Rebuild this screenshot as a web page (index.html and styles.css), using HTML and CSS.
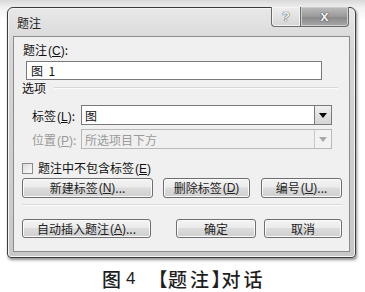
FILE: index.html
```html
<!DOCTYPE html>
<html lang="zh">
<head>
<meta charset="utf-8">
<link rel="stylesheet" href="styles.css">
</head>
<body>
<div class="win">
  <div class="titlebar">
    <span class="title">题注</span>
    <div class="caps">
      <span class="help">?</span>
      <span class="close">x</span>
    </div>
  </div>
  <div class="client">
    <div class="caplabel">题注<span class="mn">(<u>C</u>)</span>:</div>
    <div class="input">图&nbsp;&nbsp;1</div>
    <div class="group"><span>选项</span><span class="gline"></span></div>
    <div class="row">
      <span class="rlabel">标签<span class="mn">(<u>L</u>)</span>:</span>
      <div class="combo"><span class="ctext">图</span><span class="drop"><svg width="8" height="5" viewBox="0 0 8 5"><path d="M0 0H8L4 5Z" fill="#000"/></svg></span></div>
    </div>
    <div class="row dis">
      <span class="rlabel">位置<span class="mn">(<u>P</u>)</span>:</span>
      <div class="combo"><span class="ctext">所选项目下方</span><span class="drop"><svg width="8" height="5" viewBox="0 0 8 5"><path d="M0 0H8L4 5Z" fill="#a8a8a8"/></svg></span></div>
    </div>
    <div class="check"><span class="box"></span><span>题注中不包含标签<span class="mn">(<u>E</u>)</span></span></div>
    <div class="btns one">
      <span class="btn b1">新建标签<span class="mn">(<u>N</u>)</span>...</span>
      <span class="btn b2">删除标签<span class="mn">(<u>D</u>)</span></span>
      <span class="btn b3">编号<span class="mn">(<u>U</u>)</span>...</span>
    </div>
    <div class="sep"></div>
    <div class="btns two">
      <span class="btn c1">自动插入题注<span class="mn">(<u>A</u>)</span>...</span>
      <span class="btn c2">确定</span>
      <span class="btn c3">取消</span>
    </div>
  </div>
</div>
<div class="figcap"><span>图</span><span class="num">4</span><span class="br br1">【</span><span>题</span><span>注</span><span class="br br2">】</span><span>对</span><span>话</span></div>
</body>
</html>
```

FILE: styles.css
```css
html, body {
  margin: 0;
  padding: 0;
}
body {
  width: 365px;
  height: 292px;
  overflow: hidden;
  background: linear-gradient(#d8d8d8 0px, #f2f2f2 8px, #ffffff 20px);
  font-family: "Noto Sans CJK SC", "Noto Sans", sans-serif;
  font-size: 12px;
  color: #111;
  padding: 7px 0 0 7px;
  box-sizing: border-box;
}
.win {
  width: 349px;
  height: 251px;
  box-sizing: border-box;
  border: 1px solid #3c3c3c;
  border-radius: 6px 6px 4px 4px;
  background: linear-gradient(#e8e8e8, #d6d6d6 40px, #c8c8c8);
  box-shadow: 1px 2px 3px rgba(0,0,0,0.45), inset 0 0 0 1px #f4f4f4;
  display: flex;
  flex-direction: column;
}
.titlebar {
  height: 28px;
  flex: none;
  display: flex;
  align-items: flex-start;
  justify-content: space-between;
  padding-left: 9px;
}
.title {
  margin-top: 8px;
  line-height: 14px;
  color: #222;
}
.caps {
  display: flex;
  margin-right: 6px;
  margin-top: -1px;
  height: 20px;
}
.caps span {
  display: flex;
  align-items: center;
  justify-content: center;
  box-sizing: border-box;
  height: 20px;
  border: 1px solid #6a6a6a;
  border-top: none;
}
.help {
  width: 29px;
  border-radius: 0 0 0 4px;
  background: linear-gradient(#eeeeee, #d6d6d6);
  box-shadow: inset 0 0 0 1px #f6f6f6;
  font-family: "Liberation Sans", sans-serif;
  font-weight: bold;
  font-size: 13px;
  color: #f2f2f2;
  text-shadow: 0 0 1px #444, 0 0 1px #444;
  border-right: none !important;
}
.close {
  width: 49px;
  border-radius: 0 0 4px 0;
  background: linear-gradient(#bdbdbd, #9a9a9a 50%, #8a8a8a 55%, #a8a8a8);
  box-shadow: inset 0 0 0 1px #cfcfcf;
  font-family: "Liberation Sans", sans-serif;
  font-weight: bold;
  font-size: 15px;
  color: #f4f4f4;
  text-shadow: 0 0 1px #333, 0 0 1px #333;
  padding-bottom: 2px;
}
.client {
  flex: 1;
  margin: 0 5px 5px 5px;
  border: 1px solid #8c8c8c;
  background: #f0f0f0;
  padding: 6px 6px 0 8px;
  display: flex;
  flex-direction: column;
}
.mn {
  font-family: "Liberation Sans", sans-serif;
  font-size: 12px;
  margin-left: 1px;
}
.mn u {
  text-decoration-thickness: 1px;
  text-underline-offset: 1px;
}
.caplabel {
  line-height: 14px;
  height: 14px;
  margin-left: 1px;
}
.input {
  margin-top: 4px;
  margin-left: 4px;
  width: 296px;
  height: 19px;
  box-sizing: border-box;
  border: 1px solid #7a7a7a;
  background: #fff;
  line-height: 17px;
  padding-left: 4px;
}
.group {
  display: flex;
  align-items: center;
  height: 14px;
  line-height: 14px;
  margin-top: 1px;
}
.gline {
  flex: 1;
  height: 0;
  border-top: 1px solid #d6d6d6;
  border-bottom: 1px solid #fbfbfb;
  margin-left: 8px;
  margin-right: 5px;
}
.row {
  display: flex;
  align-items: center;
  height: 20px;
  margin-top: 10px;
}
.row.dis {
  margin-top: 4px;
  color: #9a9a9a;
}
.rlabel {
  width: 59px;
  padding-left: 10px;
  box-sizing: border-box;
  flex: none;
}
.combo {
  width: 251px;
  height: 20px;
  box-sizing: border-box;
  border: 1px solid #7a7a7a;
  background: #fff;
  display: flex;
  align-items: center;
  justify-content: space-between;
}
.row.dis .combo {
  border-color: #b8b8b8;
  background: #f0f0f0;
}
.ctext {
  padding-left: 3px;
}
.drop {
  width: 17px;
  height: 18px;
  box-sizing: border-box;
  border-left: 1px solid #7a7a7a;
  background: linear-gradient(#f0f0f0, #d4d4d4);
  display: flex;
  align-items: center;
  justify-content: center;
}
.row.dis .drop {
  border-left: 1px solid #c8c8c8;
  background: #f2f2f2;
}
.check {
  display: flex;
  align-items: center;
  height: 14px;
  margin-top: 12px;
  line-height: 14px;
}
.box {
  width: 11px;
  height: 11px;
  box-sizing: border-box;
  border: 1px solid #8a8a8a;
  background: linear-gradient(135deg, #dcdcdc, #fbfbfb);
  margin-right: 5px;
}
.btns {
  display: flex;
  height: 20px;
}
.btns.one {
  margin-top: 3px;
}
.btns.two {
  margin-top: 13px;
  height: 19px;
}
.btn {
  box-sizing: border-box;
  height: 100%;
  border: 1px solid #6e6e6e;
  border-radius: 3px;
  background: linear-gradient(#f4f4f4, #ebebeb 45%, #dcdcdc 50%, #cfcfcf);
  box-shadow: inset 0 0 0 1px #fbfbfb;
  display: flex;
  align-items: center;
  justify-content: center;
  line-height: 14px;
  white-space: nowrap;
  color: #222;
}
.b1 { width: 131px; }
.b2 { width: 87px; margin-left: 10px; }
.b3 { width: 81px; margin-left: 11px; }
.c1 { width: 129px; }
.c2 { width: 80px; margin-left: 25px; }
.c3 { width: 78px; margin-left: 8px; }
.sep {
  margin-top: 6px;
  margin-right: 0;
  height: 0;
  border-top: 1px solid #dadada;
  border-bottom: 1px solid #fbfbfb;
}
.figcap {
  display: flex;
  align-items: center;
  margin-top: 10px;
  padding-left: 95px;
  height: 22px;
  font-family: "Noto Sans CJK SC", sans-serif;
  font-size: 19px;
  font-weight: 500;
  color: #1e1e1e;
  line-height: 22px;
}
.figcap span {
  margin-right: 3px;
}
.figcap .num {
  font-family: "Liberation Sans", sans-serif;
  font-size: 17px;
  margin-left: 2px;
  margin-right: 22px;
}
.figcap .br {
  font-feature-settings: "palt";
  margin-right: 1px;
}
.figcap .br2 { margin-right: 0; }
```
